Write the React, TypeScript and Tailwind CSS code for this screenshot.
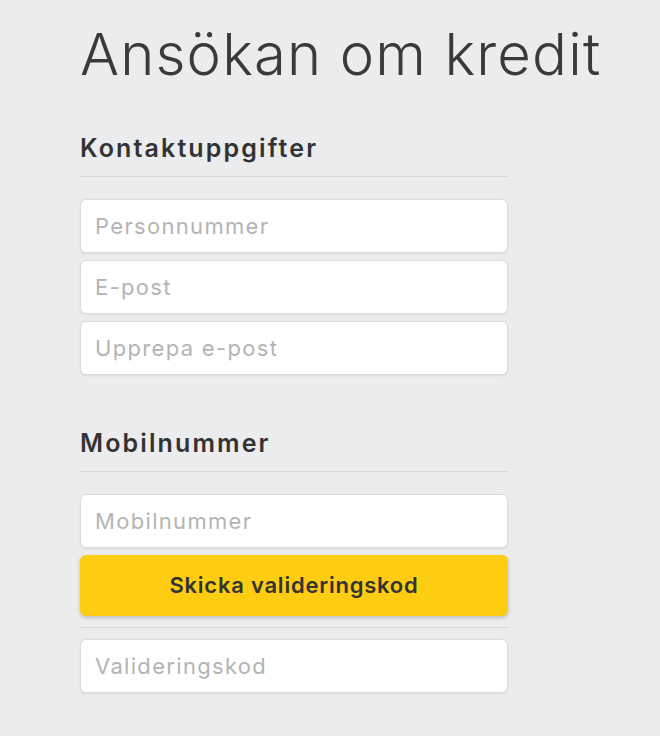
import React from "react";

const font = { fontFamily: "Inter, 'Noto Sans', sans-serif" };

function Field({ placeholder }: { placeholder: string }) {
  return (
    <input
      type="text"
      placeholder={placeholder}
      className="h-[54px] w-full rounded-[6px] border border-[#dcdcdc] bg-white px-[14px] text-[22px] tracking-[0.06em] text-[#333] shadow-[0_1px_2px_rgba(0,0,0,0.08)] outline-none placeholder:text-[#b4b4b4]"
    />
  );
}

function SectionTitle({ children }: { children: React.ReactNode }) {
  return (
    <div className="border-b border-[#d6d7d9] pb-[12px]">
      <h2 className="text-[25px] font-semibold leading-[32px] tracking-[0.085em] text-[#333]">
        {children}
      </h2>
    </div>
  );
}

export default function App() {
  return (
    <div className="min-h-screen bg-[#ebecee]" style={font}>
      <div className="w-[428px] ml-[80px] pt-[20px]">
        <h1 className="text-[58px] font-light leading-[68px] tracking-[0.02em] text-[#3a3a3a] whitespace-nowrap">
          Ansökan om kredit
        </h1>

        {/* Kontaktuppgifter */}
        <section className="mt-[44px]">
          <SectionTitle>Kontaktuppgifter</SectionTitle>
          <div className="mt-[22px] flex flex-col gap-[7px]">
            <Field placeholder="Personnummer" />
            <Field placeholder="E-post" />
            <Field placeholder="Upprepa e-post" />
          </div>
        </section>

        {/* Mobilnummer */}
        <section className="mt-[52px]">
          <SectionTitle>Mobilnummer</SectionTitle>
          <div className="mt-[22px] flex flex-col gap-[7px]">
            <Field placeholder="Mobilnummer" />
            <button
              type="button"
              className="h-[61px] w-full rounded-[6px] bg-[#fecd12] text-[22px] font-semibold tracking-[0.035em] text-[#333] shadow-[0_2px_4px_rgba(0,0,0,0.2)]"
            >
              Skicka valideringskod
            </button>
          </div>
          <div className="mt-[11px] border-t border-[#d6d7d9]" />
          <div className="mt-[11px]">
            <Field placeholder="Valideringskod" />
          </div>
        </section>
      </div>
    </div>
  );
}
